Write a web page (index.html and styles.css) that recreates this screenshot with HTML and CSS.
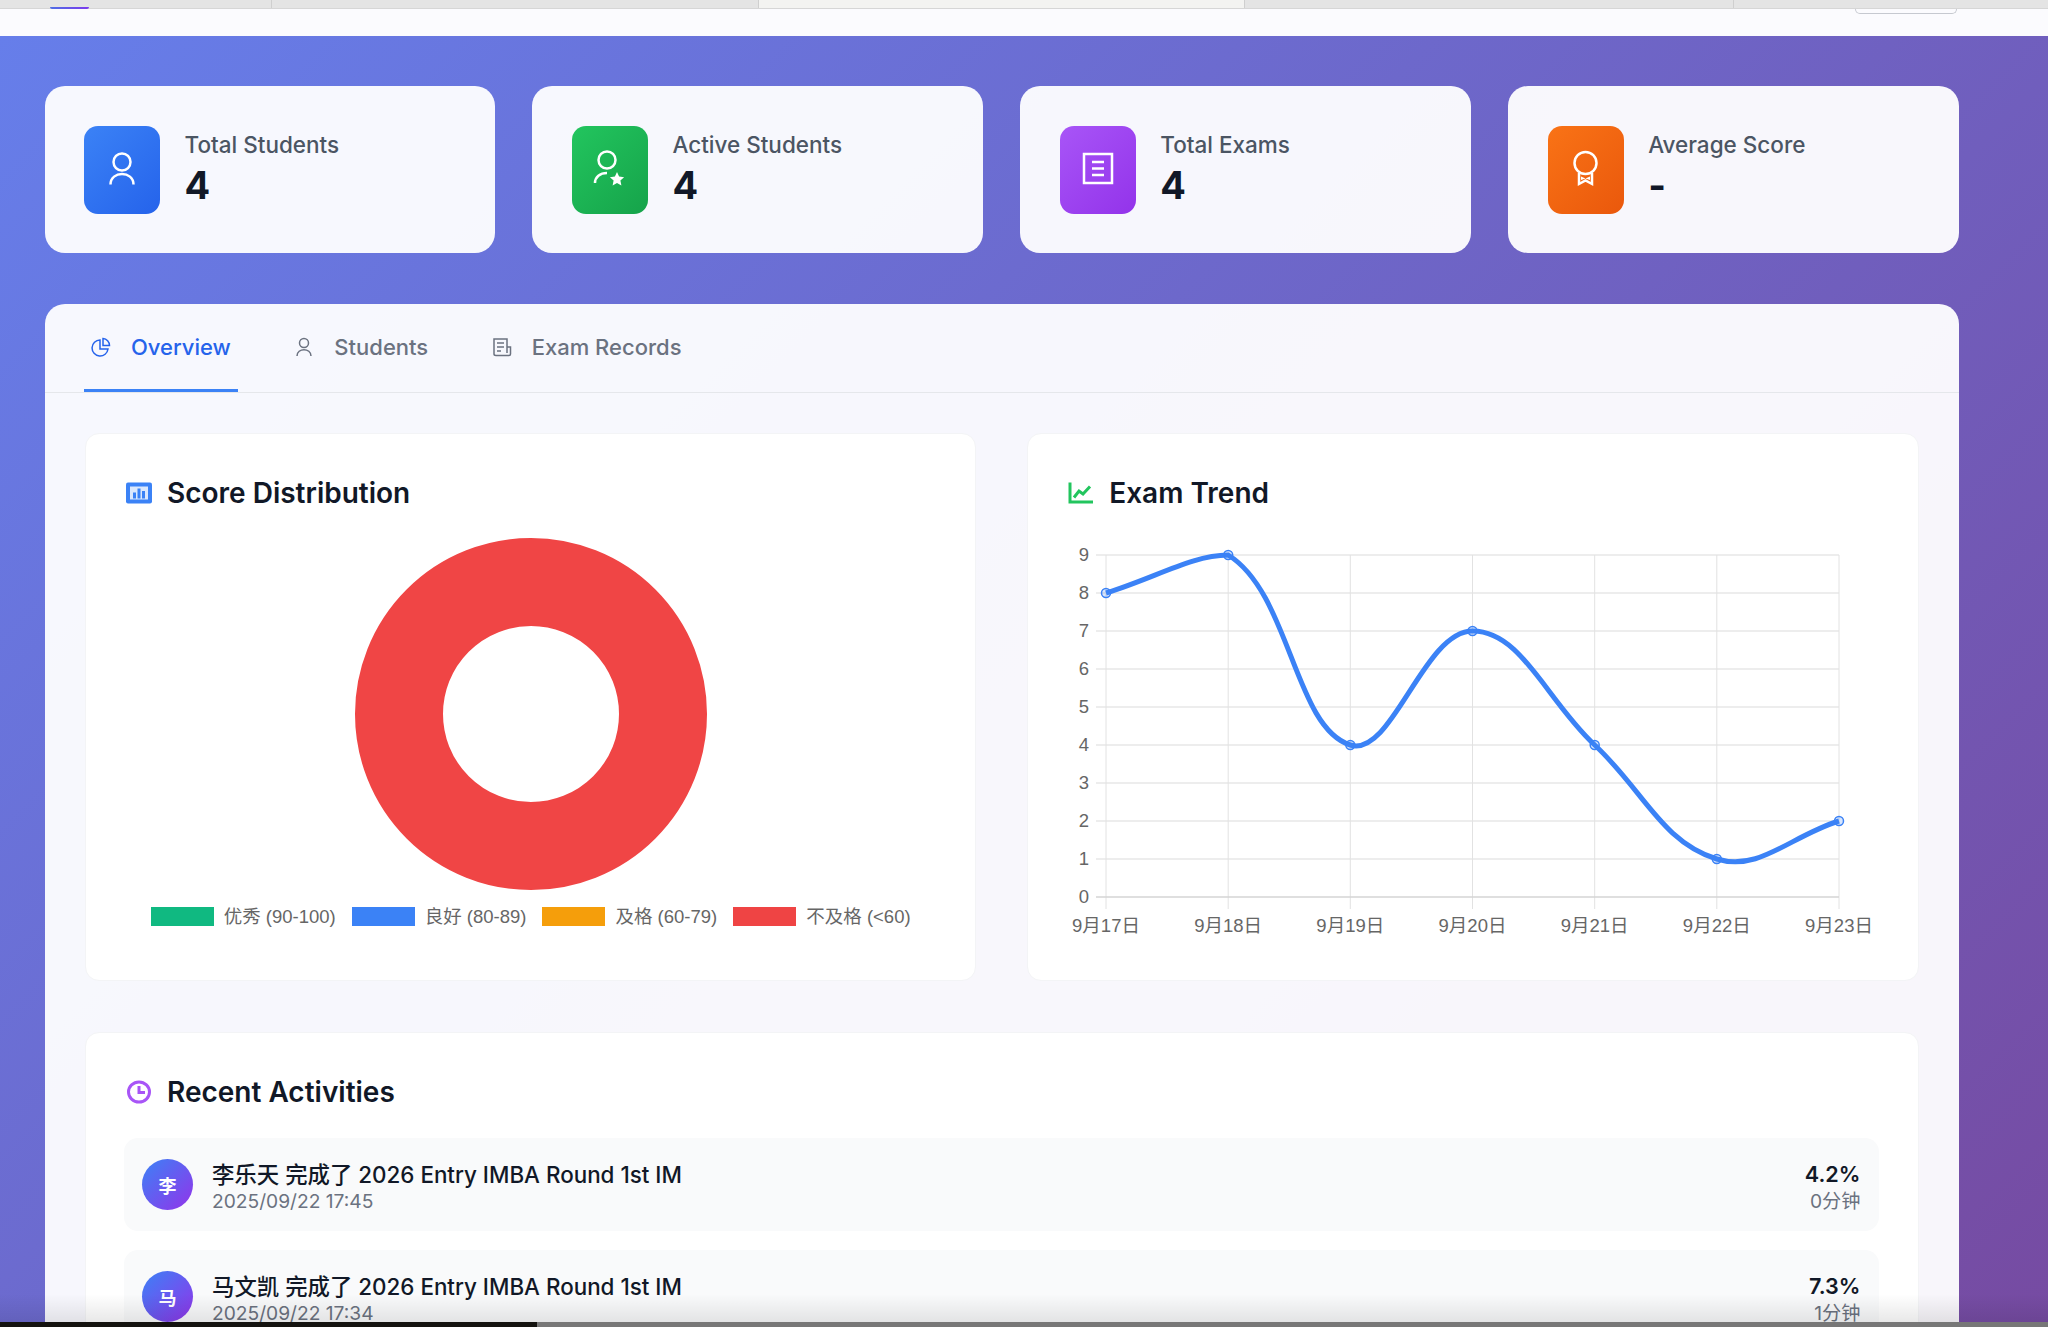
FILE: index.html
```html
<!DOCTYPE html>
<html lang="en">
<head>
    <meta charset="UTF-8">
    <title>Class Dashboard</title>
    <link rel="stylesheet" href="styles.css">
</head>
<body>
<div class="page">
    <!-- browser tab strip -->
    <div class="strip">
        <div class="strip-tab strip-tab-1"><span class="logo-cut"></span></div>
        <div class="strip-tab strip-tab-2"></div>
        <div class="strip-tab strip-tab-active strip-tab-3"></div>
        <div class="strip-tab strip-tab-4"></div>
        <div class="strip-tab strip-tab-5"></div>
    </div>
    <header class="topbar"><span class="top-btn"></span></header>

    <main class="main">
        <section class="stats">
            <div class="stat-card">
                <div class="stat-icon icon-blue">
                    <svg viewBox="0 0 76 88"><circle cx="38" cy="36" r="8.5"/><path d="M26.5 58.5C26.5 44.5 49.5 44.5 49.5 58.5"/></svg>
                </div>
                <div class="stat-text"><div class="stat-label">Total Students</div><div class="stat-value">4</div></div>
            </div>
            <div class="stat-card">
                <div class="stat-icon icon-green">
                    <svg viewBox="0 0 76 88"><circle cx="35" cy="34" r="8.5"/><path d="M23 57C23 51 28 47 35 47"/><path class="solid" d="M45 46l2.1 4.6 5 .6-3.7 3.4 1 5-4.4-2.5-4.4 2.5 1-5-3.7-3.4 5-.6z"/></svg>
                </div>
                <div class="stat-text"><div class="stat-label">Active Students</div><div class="stat-value">4</div></div>
            </div>
            <div class="stat-card">
                <div class="stat-icon icon-purple">
                    <svg viewBox="0 0 76 88"><rect x="24" y="28" width="28" height="29"/><path d="M32 36H44M32 42.500H44M32 49H44"/></svg>
                </div>
                <div class="stat-text"><div class="stat-label">Total Exams</div><div class="stat-value">4</div></div>
            </div>
            <div class="stat-card">
                <div class="stat-icon icon-orange">
                    <svg viewBox="0 0 76 88"><circle cx="37.500" cy="37" r="11"/><path d="M31 47V58L37.500 54.500L44 58V47"/><path class="solid" d="M33 50.500L37.500 52.500L42 50.500V54L37.500 52.500L33 54z"/></svg>
                </div>
                <div class="stat-text"><div class="stat-label">Average Score</div><div class="stat-value">-</div></div>
            </div>
        </section>

        <section class="panel">
            <nav class="tabs">
                <a class="tab tab-active">
                    <svg class="tab-icon" viewBox="0 0 20 20"><path d="M9 3A8 8 0 1 0 17 12H9z"/><path d="M12 1.500A7 7 0 0 1 18.500 8.500H12z"/></svg>
                    Overview
                </a>
                <a class="tab">
                    <svg class="tab-icon" viewBox="0 0 20 20"><circle cx="10" cy="6" r="4.500"/><path d="M3 19C3 10.500 17 10.500 17 19"/></svg>
                    Students
                </a>
                <a class="tab">
                    <svg class="tab-icon" viewBox="0 0 20 20"><path d="M15 16V2H2V17C2 18 3 18.500 4 18.500H17C18 18.500 18.500 18 18.500 17V10H15"/><path d="M5 6H12M5 10H12M5 14H9"/></svg>
                    Exam Records
                </a>
            </nav>

            <div class="panel-body">
                <div class="chart-grid">
                    <div class="box">
                        <h3 class="box-title">
                            <svg class="title-icon" viewBox="0 0 26 21"><rect class="fill-blue" width="26" height="21" rx="2"/><rect class="fill-pale" x="4" y="4" width="18" height="13"/><path class="fill-blue" d="M7 10h3v6H7zM11.500 6h3v10h-3zM16 8.500h3V16h-3z"/></svg>
                            Score Distribution
                        </h3>
                        <div class="donut-wrap">
                            <svg class="donut" viewBox="0 0 352 352"><circle cx="176" cy="176" r="132"/></svg>
                        </div>
                        <div class="legend">
                            <span class="legend-item"><i class="swatch sw-green"></i>优秀 (90-100)</span>
                            <span class="legend-item"><i class="swatch sw-blue"></i>良好 (80-89)</span>
                            <span class="legend-item"><i class="swatch sw-amber"></i>及格 (60-79)</span>
                            <span class="legend-item"><i class="swatch sw-red"></i>不及格 (&lt;60)</span>
                        </div>
                    </div>

                    <div class="box">
                        <h3 class="box-title">
                            <svg class="title-icon icon-trend" viewBox="0 0 26 21"><path d="M2 0V19.500H25"/><path d="M6 15L11 8.500L15 11.500L22 4"/></svg>
                            Exam Trend
                        </h3>
                        <svg class="line-chart" viewBox="0 0 810 400">
                            <g class="grid">
                                <path d="M28 12H771M28 50H771M28 88H771M28 126H771M28 164H771M28 202H771M28 240H771M28 278H771M28 316H771"/>
                                <path class="grid-v" d="M38 12V366M160.200 12V366M282.300 12V366M404.500 12V366M526.700 12V366M648.800 12V366M771 12V366"/>
                                <path class="grid-base" d="M28 354H771"/>
                            </g>
                            <g class="y-labels">
                                <text x="21" y="18">9</text><text x="21" y="56">8</text><text x="21" y="94">7</text>
                                <text x="21" y="132">6</text><text x="21" y="170">5</text><text x="21" y="208">4</text>
                                <text x="21" y="246">3</text><text x="21" y="284">2</text><text x="21" y="322">1</text><text x="21" y="360">0</text>
                            </g>
                            <g class="x-labels">
                                <text x="38" y="389">9月17日</text><text x="160.200" y="389">9月18日</text><text x="282.300" y="389">9月19日</text>
                                <text x="404.500" y="389">9月20日</text><text x="526.700" y="389">9月21日</text><text x="648.800" y="389">9月22日</text><text x="771" y="389">9月23日</text>
                            </g>
                            <path class="trend" d="M38 50C86.900 34.800 124.900 12 160.200 12C222.600 50.800 226.100 184.500 282.300 202C323.900 214.900 355.600 88 404.500 88C453.400 88 477.800 156.400 526.700 202C575.600 247.600 593.500 298.800 648.800 316C691.200 329.200 722.100 293.200 771 278"/>
                            <g class="dots">
                                <circle cx="38" cy="50" r="4.500"/><circle cx="160.200" cy="12" r="4.500"/><circle cx="282.300" cy="202" r="4.500"/>
                                <circle cx="404.500" cy="88" r="4.500"/><circle cx="526.700" cy="202" r="4.500"/><circle cx="648.800" cy="316" r="4.500"/><circle cx="771" cy="278" r="4.500"/>
                            </g>
                        </svg>
                    </div>
                </div>

                <div class="box box-recent">
                    <h3 class="box-title">
                        <svg class="title-icon icon-clock" viewBox="0 0 26 24"><ellipse cx="13" cy="12" rx="10.500" ry="10"/><path d="M13 6V12.500H19"/></svg>
                        Recent Activities
                    </h3>
                    <div class="activity">
                        <div class="avatar">李</div>
                        <div class="act-main">
                            <div class="act-name">李乐天 完成了 2026 Entry IMBA Round 1st IM</div>
                            <div class="act-sub">2025/09/22 17:45</div>
                        </div>
                        <div class="act-side">
                            <div class="act-score">4.2%</div>
                            <div class="act-sub">0分钟</div>
                        </div>
                    </div>
                    <div class="activity">
                        <div class="avatar">马</div>
                        <div class="act-main">
                            <div class="act-name">马文凯 完成了 2026 Entry IMBA Round 1st IM</div>
                            <div class="act-sub">2025/09/22 17:34</div>
                        </div>
                        <div class="act-side">
                            <div class="act-score">7.3%</div>
                            <div class="act-sub">1分钟</div>
                        </div>
                    </div>
                </div>
            </div>
        </section>
    </main>

    <div class="dock"><span class="dock-dark"></span></div>
</div>
</body>
</html>
```

FILE: styles.css
```css
*{
    margin: 0;
    padding: 0;
    box-sizing: border-box;
}
html, body{
    height: 100%;
    overflow: hidden;
}
body{
    font-family: Inter, "Noto Sans CJK SC", sans-serif;
    color: #111827;
    background: #fff;
}
.page{
    height: 100vh;
    display: flex;
    flex-direction: column;
}

/* top strip */
.strip{
    height: 9px;
    flex: none;
    display: flex;
    background: #e4e4e4;
    border-bottom: 1px solid #d6d6d6;
}
.strip-tab{
    border-right: 1px solid #cfcfcf;
}
.strip-tab-1{ width: 272px; padding-left: 50px; display: flex; align-items: flex-end; }
.strip-tab-2{ width: 487px; }
.strip-tab-3{ width: 486px; }
.strip-tab-4{ width: 489px; }
.strip-tab-5{ flex: 1; border-right: 0; }
.strip-tab-active{ background: #f3f3f1; }
.logo-cut{
    width: 39px;
    height: 2px;
    margin-bottom: -1px;
    position: relative;
    border-radius: 0 0 8px 8px;
    background: linear-gradient(90deg, #4f6ee5, #7c3aed);
}
.topbar{
    height: 27px;
    flex: none;
    display: flex;
    justify-content: flex-end;
    padding-right: 91px;
    background: #fbfbfe;
}
.top-btn{
    width: 102px;
    height: 5px;
    border: 1px solid #c6c9d0;
    border-top: 0;
    border-radius: 0 0 9px 9px;
}

/* main area */
.main{
    flex: 1;
    min-height: 0;
    padding: 50px 89px 0 44.5px;
    position: relative;
    overflow: hidden;
    background: linear-gradient(135deg, #667eea 0%, #764ba2 100%);
}
.main::after{
    content: "";
    position: absolute;
    left: 0;
    right: 0;
    bottom: 0;
    height: 28px;
    background: linear-gradient(180deg, rgba(0,0,0,0), rgba(0,0,0,.09));
}
.stats{
    display: grid;
    grid-template-columns: repeat(4, 1fr);
    gap: 37px;
    margin-bottom: 51px;
}
.stat-card{
    height: 167px;
    padding: 0 39.5px;
    display: flex;
    align-items: center;
    gap: 24.5px;
    background: rgba(255,255,255,.95);
    border-radius: 20px;
}
.stat-icon{
    width: 76px;
    height: 88px;
    flex: none;
    border-radius: 14px;
}
.stat-icon svg{
    display: block;
    width: 100%;
    height: 100%;
    fill: none;
    stroke: #fff;
    stroke-width: 2.5;
}
.stat-icon .solid{
    fill: #fff;
    stroke: none;
}
.icon-blue{ background: linear-gradient(135deg, #3b82f6, #2563eb); }
.icon-green{ background: linear-gradient(135deg, #22c55e, #16a34a); }
.icon-purple{ background: linear-gradient(135deg, #a855f7, #9333ea); }
.icon-orange{ background: linear-gradient(135deg, #f97316, #ea580c); }
.stat-text{
    padding-bottom: 3px;
}
.stat-label{
    margin-bottom: 3px;
    font-size: 22.5px;
    font-weight: 500;
    line-height: 30px;
    color: #4b5563;
}
.stat-value{
    font-size: 38px;
    font-weight: 700;
    line-height: 44px;
    color: #111827;
}

/* panel with tabs */
.panel{
    background: rgba(255,255,255,.95);
    border-radius: 20px 20px 0 0;
}
.tabs{
    height: 89px;
    padding-left: 39.5px;
    display: flex;
    gap: 49.5px;
    border-bottom: 1px solid #e5e7eb;
}
.tab{
    height: 88px;
    padding: 0 7px;
    display: flex;
    align-items: center;
    gap: 20px;
    font-size: 22px;
    font-weight: 500;
    color: #6b7280;
    border-bottom: 3px solid transparent;
}
.tab-active{
    color: #2563eb;
    border-bottom-color: #3b82f6;
}
.tab-icon{
    width: 20px;
    height: 20px;
    fill: none;
    stroke: currentColor;
    stroke-width: 1.5;
}
.panel-body{
    padding: 40px 40.5px;
}
.chart-grid{
    display: grid;
    grid-template-columns: minmax(0, 1fr) minmax(0, 1fr);
    gap: 51px;
    margin-bottom: 51px;
}
.box{
    padding: 40px 40px 37px;
    background: #fff;
    border: 1px solid #f3f4f6;
    border-radius: 14px;
}
.box-title{
    height: 38px;
    display: flex;
    align-items: center;
    gap: 15px;
    font-size: 28px;
    font-weight: 600;
    color: #111827;
}
.title-icon{
    width: 26px;
    height: 22px;
    flex: none;
}
.fill-blue{ fill: #3b82f6; }
.fill-pale{ fill: #dbe8fd; }
.icon-trend{
    fill: none;
    stroke: #22c55e;
    stroke-width: 3;
}
.icon-clock{
    height: 24px;
    fill: none;
    stroke: #a855f7;
    stroke-width: 3;
}

/* donut */
.donut-wrap{
    margin-top: 26px;
    display: flex;
    justify-content: center;
}
.donut{
    width: 352px;
    height: 352px;
    fill: none;
    stroke: #f04545;
    stroke-width: 88;
}
.legend{
    margin-top: 17px;
    display: flex;
    justify-content: center;
    gap: 16px;
    font-family: "Liberation Sans", "Noto Sans CJK SC", sans-serif;
    font-size: 18.5px;
    line-height: 19px;
    color: #666;
}
.legend-item{
    display: flex;
    align-items: center;
    gap: 10px;
}
.swatch{
    width: 63px;
    height: 19px;
}
.sw-green{ background: #10b981; }
.sw-blue{ background: #3b82f6; }
.sw-amber{ background: #f59e0b; }
.sw-red{ background: #ef4444; }

/* line chart */
.line-chart{
    display: block;
    width: 810px;
    height: 400px;
    margin: 31px 0 0;
    font-family: "Liberation Sans", "Noto Sans CJK SC", sans-serif;
    font-size: 18.5px;
}
.line-chart text{
    fill: #666;
}
.grid{
    fill: none;
    stroke: #e8e8e8;
    stroke-width: 1.5;
}
.grid .grid-v{
    stroke: #e2e2e2;
    stroke-width: 1;
}
.grid .grid-base{
    stroke: #d4d4d4;
}
.y-labels{
    text-anchor: end;
}
.x-labels{
    text-anchor: middle;
}
.trend{
    fill: none;
    stroke: #3b82f6;
    stroke-width: 5;
}
.dots circle{
    fill: rgba(59,130,246,.2);
    stroke: #3b82f6;
    stroke-width: 1.5;
}

/* activities */
.box-recent{
    padding-bottom: 40px;
}
.activity{
    height: 93px;
    margin: 19px -1px 0 -2px;
    padding: 0 18px 0 18px;
    display: flex;
    align-items: center;
    gap: 19px;
    background: #f9fafb;
    border-radius: 14px;
}
.box-title + .activity{
    margin-top: 27px;
}
.avatar{
    width: 51px;
    height: 51px;
    flex: none;
    display: flex;
    align-items: center;
    justify-content: center;
    border-radius: 50%;
    font-size: 18px;
    font-weight: 700;
    color: #fff;
    background: linear-gradient(135deg, #3b82f6, #9333ea);
}
.act-main{
    flex: 1;
    padding-top: 5px;
}
.act-name, .act-score{
    font-size: 22.4px;
    font-weight: 500;
    line-height: 29px;
}
.act-score{
    font-weight: 600;
    font-size: 21.6px;
}
.act-sub{
    font-size: 19.2px;
    line-height: 25px;
    color: #6b7280;
}
.act-side{
    padding-top: 5px;
    text-align: right;
}

/* bottom edge */
.dock{
    height: 5px;
    flex: none;
    background: #777;
}
.dock-dark{
    display: block;
    width: 537px;
    height: 5px;
    background: #14130f;
}
```
